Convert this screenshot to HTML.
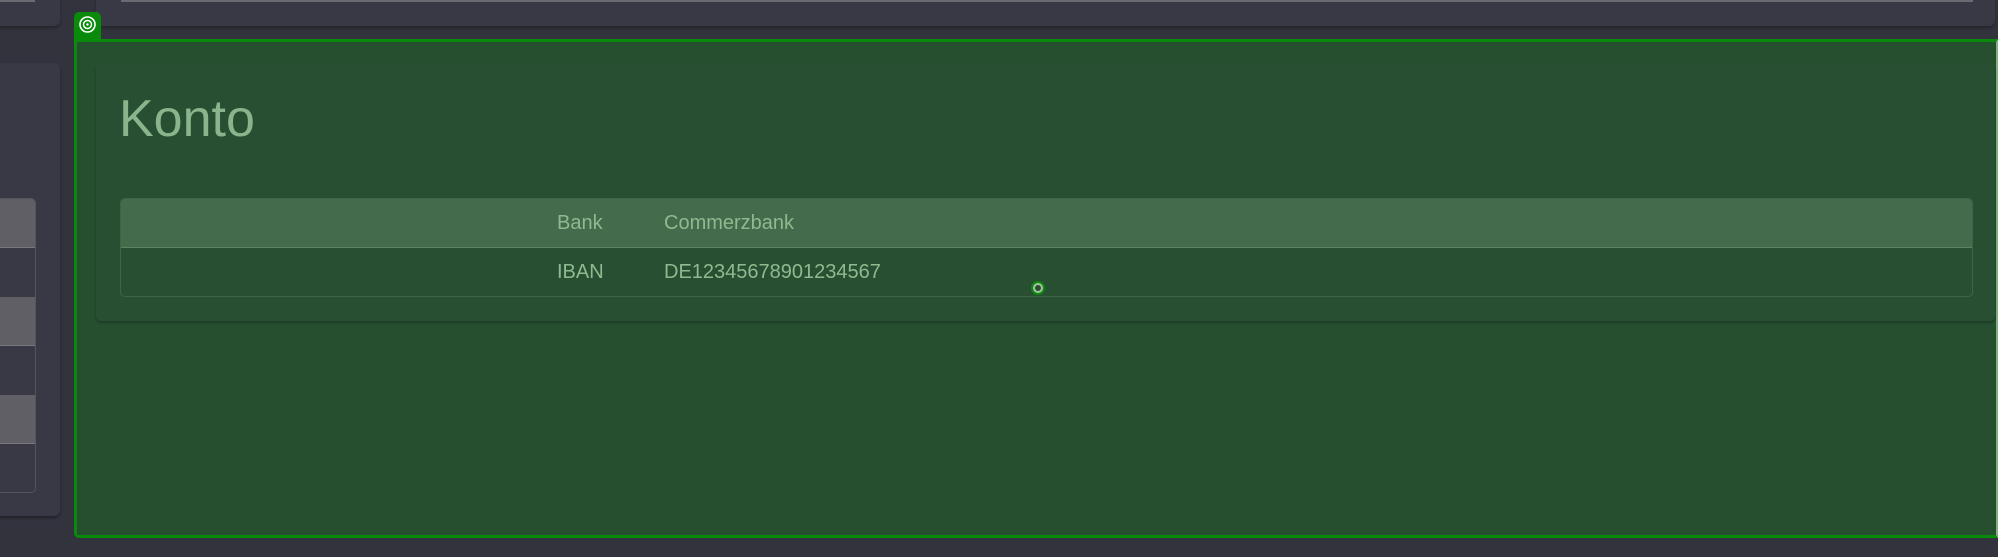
<!DOCTYPE html>
<html><head><style>
*{margin:0;padding:0;box-sizing:border-box}
body{width:1998px;height:557px;background:#33333e;position:relative;overflow:hidden;font-family:"Liberation Sans",sans-serif}
.a{position:absolute}
</style></head><body>
<div class="a" style="left:-10px;top:-10px;width:70px;height:36px;background:#393945;border-radius:6px;box-shadow:0 2px 3px rgba(0,0,0,.3)"></div>
<div class="a" style="left:0;top:0;width:35px;height:2px;background:#6a6a70"></div>
<div class="a" style="left:96px;top:-10px;width:1899px;height:36px;background:#393945;border-radius:6px;box-shadow:0 2px 3px rgba(0,0,0,.3)"></div>
<div class="a" style="left:121px;top:0;width:1852px;height:2px;background:#6a6a70"></div>
<div class="a" style="left:-10px;top:63px;width:70px;height:453px;background:#393945;border-radius:6px;box-shadow:0 2px 3px rgba(0,0,0,.35)"></div>
<div class="a" style="left:-10px;top:198px;width:46px;height:295px;border:1px solid #55555e;border-radius:5px;overflow:hidden">
 <div style="height:49px;background:#5f5f65;border-bottom:1px solid #77777c"></div>
 <div style="height:49px;background:#393945"></div>
 <div style="height:49px;background:#5f5f65;border-bottom:1px solid #77777c"></div>
 <div style="height:49px;background:#393945"></div>
 <div style="height:49px;background:#5f5f65;border-bottom:1px solid #77777c"></div>
 <div style="height:49px;background:#393945"></div>
</div>
<div class="a" style="left:74px;top:39px;width:1924px;height:499px;background:#264f30;border:3px solid #0a8a0a;border-radius:0 0 0 5px;border-right-color:#7fb07f;border-right-width:2px"></div>
<div class="a" style="left:74px;top:12px;width:27px;height:28px;background:#0a8a0a;border-radius:5px 5px 0 0"></div>
<svg class="a" style="left:78px;top:15px" width="19" height="19" viewBox="0 0 19 19"><circle cx="9.5" cy="9.5" r="7.5" fill="none" stroke="#fff" stroke-width="1.6"/><circle cx="9.5" cy="9.5" r="4" fill="none" stroke="#fff" stroke-width="1.5"/><circle cx="9.5" cy="9.5" r="1.2" fill="#fff"/></svg>
<div class="a" style="left:96px;top:63px;width:1899px;height:258px;background:#284f32;border-radius:5px;box-shadow:0 2px 2px rgba(0,0,0,.25)"></div>
<div class="a" style="left:119px;top:88px;font-size:52px;color:#8ab58c;line-height:62px">Konto</div>
<div class="a" style="left:120px;top:198px;width:1853px;height:99px;border:1px solid #3d6645;border-radius:5px;overflow:hidden">
 <div style="height:49px;background:#446b4c;border-bottom:1px solid #5b8560;position:relative">
  <span class="a" style="left:436px;top:13px;font-size:20px;color:#8fba8f">Bank</span>
  <span class="a" style="left:543px;top:13px;font-size:20px;color:#8fba8f">Commerzbank</span>
 </div>
 <div style="height:48px;position:relative">
  <span class="a" style="left:436px;top:13px;font-size:20px;color:#8fba8f">IBAN</span>
  <span class="a" style="left:543px;top:13px;font-size:20px;color:#8fba8f">DE12345678901234567</span>
 </div>
</div>
<div class="a" style="left:1031px;top:281px;width:14px;height:14px;border-radius:50%;background:#a8c0a8;border:2px solid #0a8a0a"></div>
<div class="a" style="left:1035px;top:285px;width:6px;height:6px;border-radius:50%;background:#264f30"></div>
</body></html>
